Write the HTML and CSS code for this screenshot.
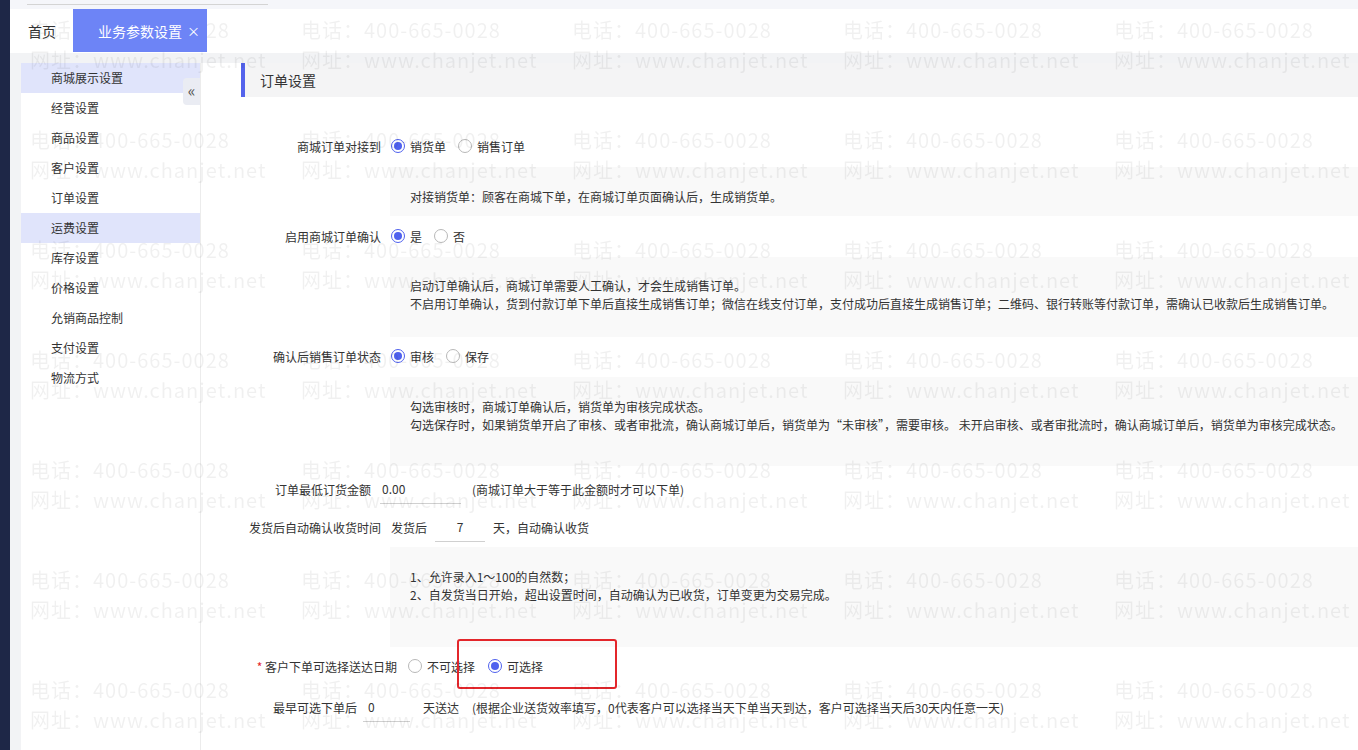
FILE: index.html
```html
<!DOCTYPE html>
<html lang="zh-CN">
<head>
  <meta charset="UTF-8">
  <title>业务参数设置</title>
  <link rel="stylesheet" href="styles.css">
</head>
<body>
  <div class="app">
    <div class="rail"></div>
    <div class="main">
      <div class="topstrip"><div class="topline"></div></div>
      <div class="tabs">
        <span class="tab">首页</span>
        <span class="tab tab-active">业务参数设置<span class="tab-close">×</span></span>
      </div>

      <div class="page">
        <aside class="side">
          <ul class="menu">
            <li class="menu-item is-active">商城展示设置</li>
            <li class="menu-item">经营设置</li>
            <li class="menu-item">商品设置</li>
            <li class="menu-item">客户设置</li>
            <li class="menu-item">订单设置</li>
            <li class="menu-item is-active">运费设置</li>
            <li class="menu-item">库存设置</li>
            <li class="menu-item">价格设置</li>
            <li class="menu-item">允销商品控制</li>
            <li class="menu-item">支付设置</li>
            <li class="menu-item">物流方式</li>
          </ul>
          <span class="collapse">«</span>
        </aside>

        <section class="content">
          <div class="section-title">订单设置</div>

          <div class="form">
            <div class="field field-r1">
              <span class="field-label">商城订单对接到</span>
              <label class="radio is-checked"><span class="radio-dot"></span>销货单</label>
              <label class="radio"><span class="radio-dot"></span>销售订单</label>
            </div>
            <div class="note note-1">
              <p>对接销货单：顾客在商城下单，在商城订单页面确认后，生成销货单。</p>
            </div>

            <div class="field field-r2">
              <span class="field-label">启用商城订单确认</span>
              <label class="radio is-checked"><span class="radio-dot"></span>是</label>
              <label class="radio"><span class="radio-dot"></span>否</label>
            </div>
            <div class="note note-2">
              <p>启动订单确认后，商城订单需要人工确认，才会生成销售订单。</p>
              <p>不启用订单确认，货到付款订单下单后直接生成销售订单；微信在线支付订单，支付成功后直接生成销售订单；二维码、银行转账等付款订单，需确认已收款后生成销售订单。</p>
            </div>

            <div class="field field-r3">
              <span class="field-label">确认后销售订单状态</span>
              <label class="radio is-checked"><span class="radio-dot"></span>审核</label>
              <label class="radio"><span class="radio-dot"></span>保存</label>
            </div>
            <div class="note note-3">
              <p>勾选审核时，商城订单确认后，销货单为审核完成状态。</p>
              <p>勾选保存时，如果销货单开启了审核、或者审批流，确认商城订单后，销货单为“未审核”，需要审核。 未开启审核、或者审批流时，确认商城订单后，销货单为审核完成状态。</p>
            </div>

            <div class="field field-r4">
              <span class="field-label label-amount">订单最低订货金额</span>
              <span class="line-input input-amount">0.00</span>
              <span class="hint hint-amount">(商城订单大于等于此金额时才可以下单)</span>
            </div>

            <div class="field field-r5">
              <span class="field-label">发货后自动确认收货时间</span>
              <span>发货后</span>
              <span class="line-input input-days">7</span>
              <span class="hint hint-days">天，自动确认收货</span>
            </div>
            <div class="note note-4">
              <p>1、允许录入1～100的自然数；</p>
              <p>2、自发货当日开始，超出设置时间，自动确认为已收货，订单变更为交易完成。</p>
            </div>

            <div class="field field-r6">
              <span class="field-label label-delivery"><i class="required">*</i> 客户下单可选择送达日期</span>
              <label class="radio"><span class="radio-dot"></span>不可选择</label>
              <label class="radio is-checked"><span class="radio-dot"></span>可选择</label>
              <span class="mark-box"></span>
            </div>

            <div class="field field-r7">
              <span class="field-label label-earliest">最早可选下单后</span>
              <span class="line-input input-earliest">0</span>
              <span class="hint hint-earliest">天送达</span>
              <span class="hint hint-earliest-tip">(根据企业送货效率填写，0代表客户可以选择当天下单当天到达，客户可选择当天后30天内任意一天)</span>
            </div>
          </div>
        </section>
      </div>
    </div>
  </div>

  <div class="watermark" id="watermark"></div>

  <script>
    // 水印：5 列 x 7 行
    const wm = document.getElementById('watermark');
    for (let i = 0; i < 35; i++) {
      const cell = document.createElement('div');
      cell.className = 'wm-cell';
      cell.innerHTML = '<div>电话：400-665-0028</div><div>网址：www.chanjet.net</div>';
      wm.appendChild(cell);
    }
  </script>
</body>
</html>
```

FILE: styles.css
```css
* {
  box-sizing: border-box;
}

body {
  margin: 0;
  font-family: "Noto Sans CJK SC", "Microsoft YaHei", sans-serif;
  font-size: 12px;
  color: #333;
  overflow: hidden;
}

.app {
  display: flex;
  height: 100vh;
}

.rail {
  flex: 0 0 10px;
  background: #1e2747;
}

.main {
  flex: 1;
  min-width: 0;
  display: flex;
  flex-direction: column;
}

.topstrip {
  height: 9px;
  padding: 4px 0 0 17px;
  background: #f5f6fa;
}

.topline {
  width: 241px;
  border-top: 1px solid #d4d4d4;
}

.tabs {
  height: 44px;
  display: flex;
  align-items: center;
  padding-left: 18px;
  background: #fff;
}

.tab {
  display: flex;
  align-items: center;
  font-size: 14px;
  color: #333;
}

.tab-active {
  position: relative;
  z-index: 2;
  align-self: flex-start;
  width: 134px;
  height: 43px;
  margin-left: 17px;
  padding-left: 25px;
  background: #6d84f6;
  color: #fff;
}

.tab-close {
  margin-left: 5px;
  font-size: 13px;
}

.page {
  flex: 1;
  display: flex;
  padding: 10px 0 0 11px;
  background: #f2f3f5;
}

.side {
  position: relative;
  flex: 0 0 180px;
  background: #fff;
  border-right: 1px solid #ececec;
}

.menu {
  list-style: none;
  margin: 0;
  padding: 0;
}

.menu-item {
  height: 30px;
  line-height: 30px;
  padding-left: 30px;
}

.menu-item.is-active {
  background: #e0e4fb;
}

.collapse {
  position: absolute;
  top: 15px;
  right: 0;
  width: 17px;
  height: 27px;
  line-height: 25px;
  text-align: center;
  font-size: 16px;
  color: #555;
  background: #eaecf3;
  border-radius: 4px 0 0 4px;
}

.content {
  flex: 1;
  min-width: 0;
  padding-left: 40px;
  background: #fff;
}

.section-title {
  height: 34px;
  line-height: 34px;
  padding-left: 15px;
  font-size: 14px;
  background: #f4f4f5;
  border-left: 4px solid #5463ec;
}

.form {
  padding-top: 34px;
}

.field {
  position: relative;
  display: flex;
  align-items: center;
  height: 30px;
  white-space: nowrap;
}

.field-label {
  flex-shrink: 0;
  width: 140px;
  margin-right: 10px;
  text-align: right;
}

.label-amount {
  width: 130px;
  margin-right: 9px;
}

.label-delivery {
  width: 156px;
  margin-right: 11px;
}

.label-earliest {
  width: 116px;
  margin-right: 6px;
}

.required {
  font-style: normal;
  color: #e3262b;
}

.radio {
  display: flex;
  align-items: center;
  margin-right: 12px;
}

.radio-dot {
  position: relative;
  width: 14px;
  height: 14px;
  margin-right: 5px;
  border: 1px solid #b8b8b8;
  border-radius: 50%;
  background: #fff;
}

.radio.is-checked .radio-dot {
  border-color: #4f61ee;
}

.radio.is-checked .radio-dot::after {
  content: "";
  position: absolute;
  top: 2px;
  left: 2px;
  width: 8px;
  height: 8px;
  border-radius: 50%;
  background: #4f61ee;
}

.field-r6 .radio {
  margin-right: 13px;
}

.note {
  margin-left: 149px;
  padding: 21px 20px 0;
  background: #f9f9f9;
  line-height: 18px;
}

.note p {
  margin: 0;
  white-space: nowrap;
}

.field-r1 { margin-bottom: 6px; }
.note-1 { height: 49px; margin-bottom: 5px; }
.field-r2 { margin-bottom: 6px; }
.note-2 { height: 80px; padding-top: 20px; margin-bottom: 4px; }
.field-r3 { margin-bottom: 6px; }
.note-3 { height: 89px; margin-bottom: 8px; }
.field-r4 { margin-bottom: 8px; }
.field-r5 { margin-bottom: 5px; }
.note-4 { height: 100px; margin-bottom: 4px; }
.field-r6 { margin-bottom: 11px; }

.line-input {
  display: flex;
  align-items: center;
  align-self: stretch;
  border-bottom: 1px solid #d0d0d0;
}

.input-amount {
  width: 81px;
  padding-left: 2px;
}

.input-days {
  width: 50px;
  margin-left: 8px;
  justify-content: center;
}

.input-earliest {
  width: 47px;
  padding-left: 5px;
}

.hint-amount { margin-left: 11px; }
.hint-days { margin-left: 8px; }
.hint-earliest { margin-left: 13px; }
.hint-earliest-tip { margin-left: 13px; }

.mark-box {
  position: absolute;
  top: -12px;
  left: 216px;
  width: 160px;
  height: 50px;
  border: 2px solid #e3262b;
  border-radius: 3px;
}

.watermark {
  position: fixed;
  inset: 0;
  z-index: 1;
  pointer-events: none;
  display: grid;
  grid-template-columns: repeat(5, 271px);
  grid-auto-rows: 110px;
  padding: 15px 0 0 30px;
  overflow: hidden;
}

.wm-cell {
  font-size: 20px;
  line-height: 30px;
  letter-spacing: 1px;
  color: rgba(0, 0, 0, 0.06);
  white-space: nowrap;
}
```
